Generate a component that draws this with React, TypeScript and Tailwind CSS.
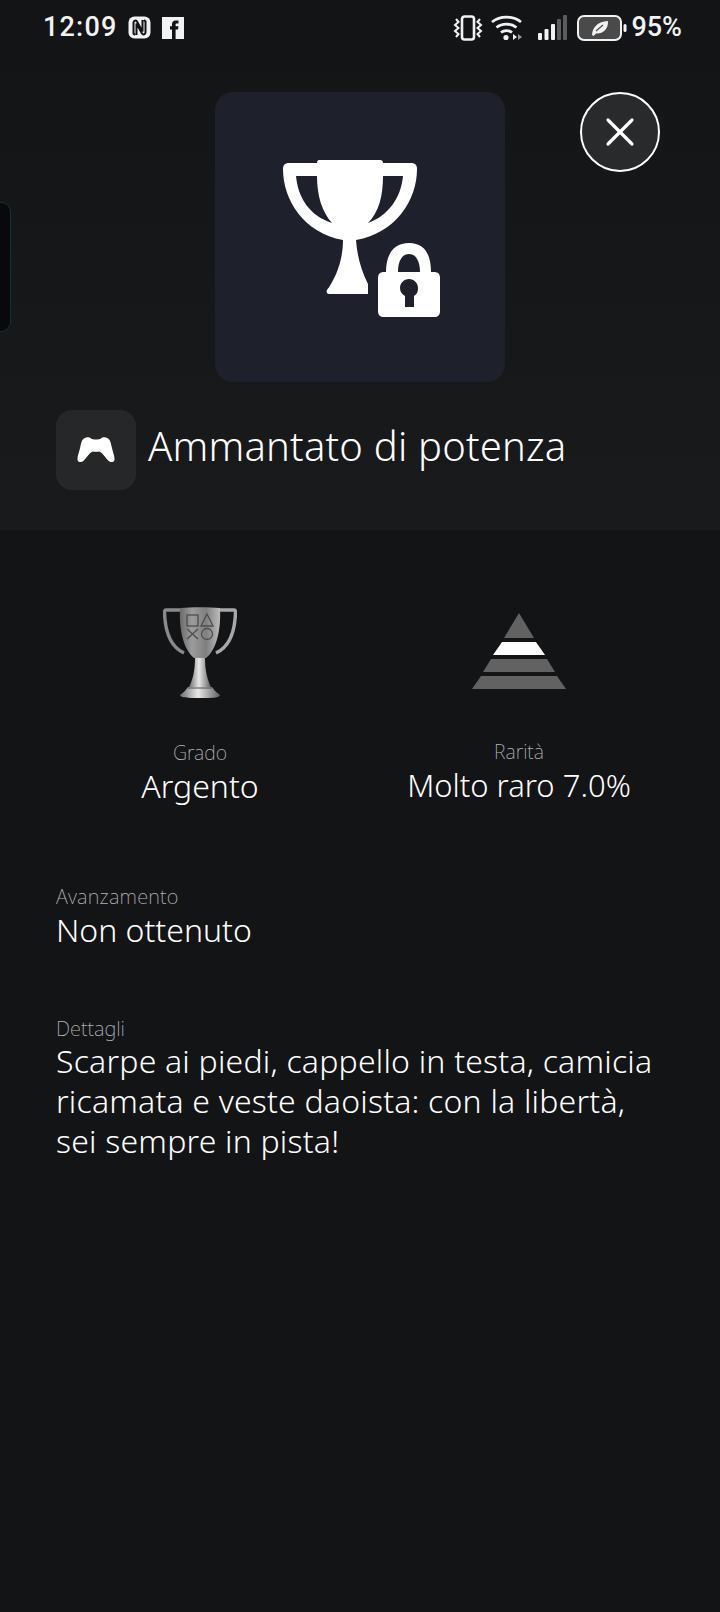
import { X } from "lucide-react";

function Nfc() {
  return (
    <svg width="23" height="23" viewBox="0 0 23 23" fill="none">
      <rect x="0.5" y="0.5" width="22" height="22" rx="6" fill="#f2f2f2" />
      <path d="M7 19 L5.5 17.5 V6.5 C5.5 4.5 8 4 9 5.5 L14.5 15.5 V4 M16 4 L17.5 5.5 V16.5 C17.5 18.5 15 19 14 17.5 L8.5 7.5 V19" stroke="#121316" strokeWidth="2" />
    </svg>
  );
}

function Facebook() {
  return (
    <svg width="22" height="22" viewBox="0 0 22 22">
      <rect width="22" height="22" fill="#f2f2f2" />
      <path d="M10 22 V12.5 H8 V9.2 H10 V7 C10 4.6 11.5 3.4 13.5 3.4 H16.5 V6.5 H14.8 C14 6.5 13.6 6.9 13.6 7.6 V9.2 H16.5 L16 12.5 H13.6 V22 Z" fill="#121316" />
    </svg>
  );
}

function Vibrate() {
  return (
    <svg width="30" height="26" viewBox="0 0 30 26" fill="none" stroke="#f2f2f2">
      <rect x="9" y="1.5" width="12" height="23" rx="2.5" strokeWidth="2.6" />
      <path d="M3 4 L5.5 7 L2 10 L5.5 13 L2 16 L5.5 19 L3 22" strokeWidth="2" />
      <path d="M27 4 L24.5 7 L28 10 L24.5 13 L28 16 L24.5 19 L27 22" strokeWidth="2" />
    </svg>
  );
}

function Wifi() {
  return (
    <svg width="31" height="26" viewBox="0 0 31 26" fill="none">
      <path d="M1 7 C9 0.5 22 0.5 30 7" stroke="#f2f2f2" strokeWidth="2.8" />
      <path d="M5.5 12.5 C11 8 20 8 25.5 12.5" stroke="#f2f2f2" strokeWidth="2.8" />
      <path d="M10 17.5 C13 15 18 15 21 17.5" stroke="#f2f2f2" strokeWidth="2.8" />
      <circle cx="15" cy="22.5" r="2.6" fill="#f2f2f2" />
      <path d="M22 19 L26 22 L22 25 Z" fill="#f2f2f2" />
      <path d="M27 19 L31 22 L27 25 Z" fill="#9a9a9a" />
    </svg>
  );
}

function Signal() {
  return (
    <svg width="29" height="26" viewBox="0 0 29 26">
      <rect x="0" y="18" width="4" height="7" rx="1" fill="#f2f2f2" />
      <rect x="6.5" y="14" width="4" height="11" rx="1" fill="#f2f2f2" />
      <rect x="13" y="9" width="4" height="16" rx="1" fill="#f2f2f2" />
      <rect x="19" y="4" width="4" height="21" rx="1" fill="#5c5c5c" />
      <rect x="25" y="0" width="4" height="25" rx="1" fill="#5c5c5c" />
    </svg>
  );
}

function Battery() {
  return (
    <svg width="50" height="26" viewBox="0 0 50 26" fill="none">
      <rect x="1" y="1" width="43" height="24" rx="6" fill="#4a4a4a" stroke="#f2f2f2" strokeWidth="2" />
      <rect x="46.5" y="9" width="3" height="8" rx="1.5" fill="#f2f2f2" />
      <path d="M15 20 C15.5 12 21 6.5 31 6 C31.5 14 26 19 19 18.5 L16.5 21 Z" fill="#f2f2f2" />
      <path d="M19 16 L26 10" stroke="#4a4a4a" strokeWidth="1.2" />
    </svg>
  );
}

function TrophyLocked() {
  return (
    <svg width="158" height="158" viewBox="0 0 158 158">
      <path
        fillRule="evenodd"
        fill="#ffffff"
        d="M36 0 H97 C99 0 100 1 100 3 H128 C132 3 134 5 134 9 C134 40 113 73 73 80 C74 95 78 110 85 124 V134 H46 C44 134 43 132 44 130 C53 118 60 100 60 80 C21 73 0 40 0 9 C0 5 2 3 6 3 H34 C34 1 35 0 36 0 Z M13 16 C15 38 27 56 49 63 C39 52 34 36 34 16 Z M120 16 H100 C100 36 96 52 85 63 C105 56 118 38 120 16 Z"
      />
      <path
        fillRule="evenodd"
        fill="#ffffff"
        d="M103 112 C103 95 110 83 126 83 C142 83 148 95 148 112 H151 C155 112 157 114 157 118 V151 C157 155 155 157 151 157 H101 C97 157 95 155 95 151 V118 C95 114 97 112 101 112 Z M115 112 H137 C137 101 133 94 126 94 C119 94 115 101 115 112 Z"
      />
      <path fill="#1e212b" d="M126 119 C131 119 135 123 135 128 C135 132 134 134 131 136 V147 H122 V136 C119 134 117 132 117 128 C117 123 121 119 126 119 Z" />
    </svg>
  );
}

function Controller() {
  return (
    <svg width="40" height="26" viewBox="0 0 42 28">
      <path
        fill="#ffffff"
        d="M9 1 C11 0 14 0 16 2 C17 3 25 3 26 2 C28 0 31 0 33 1 C36 2 37 6 38 11 C39 16 41 20 41 24 C41 27 38 28 35 26 C31 23 29 18 25 16 H17 C13 18 11 23 7 26 C4 28 1 27 1 24 C1 20 3 16 4 11 C5 6 6 2 9 1 Z"
      />
    </svg>
  );
}

function SilverTrophy() {
  return (
    <svg width="74" height="92" viewBox="0 0 74 92" fill="none">
      <defs>
        <linearGradient id="cup" x1="0" y1="0" x2="1" y2="0">
          <stop offset="0" stopColor="#6a6a6a" />
          <stop offset="0.3" stopColor="#9c9c9c" />
          <stop offset="0.65" stopColor="#7f7f7f" />
          <stop offset="1" stopColor="#bdbdbd" />
        </linearGradient>
        <linearGradient id="stem" x1="0" y1="0" x2="1" y2="0">
          <stop offset="0" stopColor="#6d6d6d" />
          <stop offset="0.45" stopColor="#e8e8e8" />
          <stop offset="1" stopColor="#5f5f5f" />
        </linearGradient>
      </defs>
      <path d="M17 3 H3 C2 3 1.5 4 1.5 5 C2 25 8 40 21 46" stroke="#8a8a8a" strokeWidth="3.4" />
      <path d="M57 3 H71 C72 3 72.5 4 72.5 5 C72 25 66 40 53 46" stroke="#a8a8a8" strokeWidth="3.4" />
      <path d="M17 1 C28 0 46 0 57 1 C58 22 54 42 43 51 H31 C20 42 16 22 17 1 Z" fill="url(#cup)" />
      <path d="M32 51 H42 C42 63 44 72 48 80 H26 C30 72 32 63 32 51 Z" fill="url(#stem)" />
      <path d="M25 80 H49 C51 83 54 86 57 88 C56 91 50 91 37 91 C24 91 18 91 17 88 C20 86 23 83 25 80 Z" fill="url(#stem)" />
      <path d="M25 81 H49" stroke="#4f4f4f" strokeWidth="1" />
      <g stroke="#4d4d4d" strokeWidth="1.3">
        <rect x="24" y="8" width="11" height="11" />
        <path d="M44 7 L50 19 H38 Z" />
        <path d="M24 22 L35 32 M35 22 L24 32" />
        <circle cx="44" cy="27" r="5.5" />
      </g>
    </svg>
  );
}

function Rarity() {
  return (
    <svg width="94" height="76" viewBox="0 0 94 76">
      <path d="M47 0 L62 25 H32 Z" fill="#626262" />
      <path d="M30 29 H64 L73 42 H21 Z" fill="#ffffff" />
      <path d="M19 46 H75 L83 59 H11 Z" fill="#626262" />
      <path d="M9 63 H85 L94 76 H0 Z" fill="#626262" />
    </svg>
  );
}

export default function App() {
  return (
    <div className="min-h-[1612px] bg-[#131416] font-['Noto_Sans',sans-serif] text-white">
      <header className="relative h-[530px] overflow-hidden bg-gradient-to-b from-[#131416] to-[#191a1c]">
        <div className="flex h-[54px] items-center justify-between pt-[1px] pl-[43px] pr-[38px]">
          <div className="flex items-center">
            <span className="w-[85px] text-[27px] leading-none font-medium tracking-[1.2px] text-[#f2f2f2] font-['Roboto',sans-serif]">12:09</span>
            <Nfc />
            <span className="ml-[11px]"><Facebook /></span>
          </div>
          <div className="flex items-center">
            <Vibrate />
            <span className="ml-[8px]"><Wifi /></span>
            <span className="ml-[16px]"><Signal /></span>
            <span className="ml-[10px]"><Battery /></span>
            <span className="ml-[4px] text-[27px] leading-none font-medium text-[#f2f2f2] font-['Roboto',sans-serif]">95%</span>
          </div>
        </div>

        <div className="absolute top-[202px] left-[-20px] h-[130px] w-[31px] rounded-[10px] border-[1.5px] border-[#12323a] bg-[#08090a]" />

        <div className="mx-auto mt-[38px] flex h-[290px] w-[290px] items-center justify-center rounded-[18px] bg-[#1e212b]">
          <span className="mt-[3px] ml-[4px]"><TrophyLocked /></span>
        </div>
        <button className="absolute top-[92px] left-[580px] flex h-[80px] w-[80px] items-center justify-center rounded-full border-2 border-white bg-[#292a2c]">
          <X size={48} strokeWidth={1.6} color="#ffffff" />
        </button>

        <div className="mt-[28px] flex items-center gap-[12px] pl-[56px]">
          <div className="flex h-[80px] w-[80px] items-center justify-center rounded-[16px] bg-[#262729]">
            <Controller />
          </div>
          <h1 className="mt-[-8px] text-[40px] leading-none font-light tracking-[0.2px] whitespace-nowrap">Ammantato di potenza</h1>
        </div>
      </header>

      <main className="px-[56px]">
        <div className="grid grid-cols-2 pt-[74px]">
          <div className="flex flex-col items-center pr-[16px]">
            <div className="flex h-[100px] items-center pb-[3px]"><SilverTrophy /></div>
            <div className="mt-[37px] text-[19.5px] leading-[24px] font-extralight text-[#b4b5b7]">Grado</div>
            <div className="mt-[1px] text-[32px] leading-[40px] font-light">Argento</div>
          </div>
          <div className="flex flex-col items-center pl-[14px]">
            <div className="flex h-[100px] items-center pb-[6px]"><Rarity /></div>
            <div className="mt-[36px] text-[19.5px] leading-[24px] font-extralight text-[#b4b5b7]">Rarità</div>
            <div className="mt-[1px] text-[31px] leading-[40px] font-light whitespace-nowrap">Molto raro 7.0%</div>
          </div>
        </div>

        <div className="mt-[79px]">
          <div className="text-[20px] leading-[24px] font-extralight tracking-[0.2px] text-[#b4b5b7]">Avanzamento</div>
          <div className="mt-[1px] text-[32px] leading-[40px] font-light">Non ottenuto</div>
        </div>

        <div className="mt-[67px]">
          <div className="text-[20px] leading-[24px] font-extralight text-[#b4b5b7]">Dettagli</div>
          <p className="text-[32px] leading-[40px] font-light tracking-[0.2px]">
            Scarpe ai piedi, cappello in testa, camicia ricamata e veste daoista: con la libertà, sei sempre in pista!
          </p>
        </div>
      </main>
    </div>
  );
}
